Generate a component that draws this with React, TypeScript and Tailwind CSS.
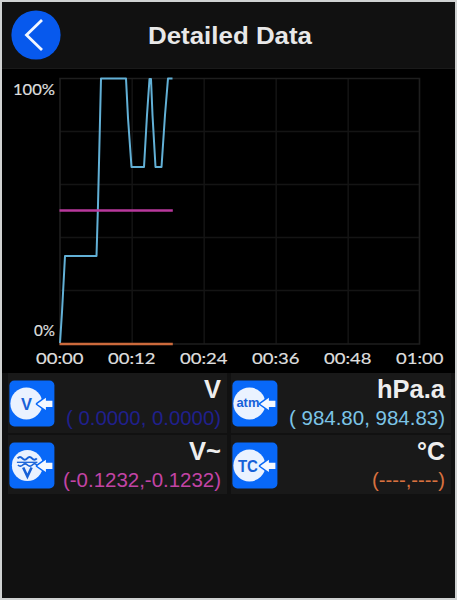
import React from "react";

const FONT = "font-['Liberation_Sans',Arial,sans-serif]";
const GRID_X = [132, 204, 276, 348];
const GRID_Y = [131.5, 184.5, 237.5, 290.5];
const TIMES = ["00:00", "00:12", "00:24", "00:36", "00:48", "01:00"];

function Chart() {
  return (
    <svg viewBox="2 69 453 304" className="block h-[304px] w-[453px] shrink-0 bg-black font-['Lato','Open_Sans',sans-serif]">
      {GRID_X.map((x) => (
        <line key={x} x1={x + 0.2} x2={x + 0.2} y1="78" y2="344" stroke="#141414" strokeWidth="1.5" />
      ))}
      {GRID_Y.map((y) => (
        <line key={y} x1="60" x2="420" y1={y} y2={y} stroke="#141414" strokeWidth="1.5" />
      ))}
      <path d="M60 344V78.5H419.5V344Z" fill="none" stroke="#1e1e1e" strokeWidth="1.6" />
      <path
        d="M60 343L62 312L65 256H96.5L98 205L101 78.5H126L128 118L131.5 167H144L147 115L149.5 79H151L152.5 115L155.5 167H161.5L165 115L168 78.5H172.5"
        fill="none"
        stroke="#62b0d6"
        strokeWidth="2"
        strokeLinejoin="round"
      />
      <path d="M59.5 210.5H172.8" stroke="#b8389c" strokeWidth="2.6" />
      <path d="M59.5 344H172.8" stroke="#cc6a3c" strokeWidth="2.6" />
      <g fill="#dedede" stroke="#dedede" strokeWidth="0.2" fontSize="15.5">
        <text x="13" y="94.5" textLength="42" lengthAdjust="spacingAndGlyphs">100%</text>
        <text x="34" y="336" textLength="21" lengthAdjust="spacingAndGlyphs">0%</text>
        {TIMES.map((t, i) => (
          <text key={t} x={36 + i * 72} y="364.3" textLength="47.5" lengthAdjust="spacingAndGlyphs">{t}</text>
        ))}
      </g>
    </svg>
  );
}

function ChannelIcon({ kind }: { kind: string }) {
  return (
    <svg viewBox="-0.4 -0.5 45 46" className="h-[46px] w-[45px] shrink-0 overflow-visible">
      <rect width="45" height="46" rx="5" fill="#0868f8" />
      <circle cx={kind === "AC" ? 18 : 17} cy="23" r={kind === "AC" ? 15.5 : 16} fill="#eaf2ff" />
      <path
        d="M27.8 23.4L36.5 17.2V20.3H43V26.5H36.5V29.6Z"
        fill="#f4f8ff"
        stroke="#0868f8"
        strokeWidth="3"
        strokeLinejoin="round"
        paintOrder="stroke"
      />
      <g fill="#1761d8" textAnchor="middle" fontWeight="700" className={FONT}>
        {kind === "V" && <text x="17" y="29.2" fontSize="16.5">V</text>}
        {kind === "atm" && <text x="15.5" y="26.8" fontSize="12.5" textLength="23" lengthAdjust="spacingAndGlyphs">atm</text>}
        {kind === "TC" && <text x="15.5" y="29" fontSize="16" textLength="20" lengthAdjust="spacingAndGlyphs">TC</text>}
      </g>
      {kind === "AC" && (
        <g fill="none" stroke="#1761d8">
          <path d="M8.2 15.8q2.4-2.8 4.8 0t4.8 0t4.8 0t4.8 0" strokeWidth="2" />
          <path d="M7.5 19.8H28" strokeWidth="1.3" />
          <path d="M8.5 22.5q2.4 2.4 4.8 0t4.8 0t4.8 0t4.4 0" strokeWidth="1.6" />
          <path d="M13.8 25L18 34L22.2 25" strokeWidth="2.6" />
        </g>
      )}
    </svg>
  );
}

type CardProps = { kind: string; unit: string; unitWidth: number; value: string; color: string; width: number };

function Card({ kind, unit, unitWidth, value, color, width }: CardProps) {
  return (
    <div className="flex bg-[#191919] pt-[7px] pl-px">
      <ChannelIcon kind={kind} />
      <div className="flex min-w-0 flex-1 flex-col items-end pr-[6px]">
        <svg width={unitWidth} height="24" className="-mt-[4px] shrink-0 overflow-visible text-[#eeeeee]">
          <text x="0" y="21.5" fontSize="25" fontWeight="700" fill="currentColor" textLength={unitWidth} lengthAdjust="spacingAndGlyphs">
            {unit}
          </text>
        </svg>
        <svg width={width} height="24" className={`mt-[6px] shrink-0 overflow-visible ${color}`}>
          <text x="0" y="18.5" fontSize="19.5" fill="currentColor" textLength={width} lengthAdjust="spacingAndGlyphs" xmlSpace="preserve">
            {value}
          </text>
        </svg>
      </div>
    </div>
  );
}

export default function App() {
  return (
    <div className={`flex h-[600px] w-[457px] flex-col overflow-hidden border-2 border-[#d0d2d2] bg-[#111111] ${FONT}`}>
      <header className="flex h-[67px] shrink-0 items-center border-b border-[#1a1a1a] pl-[9px]">
        <svg viewBox="0 0 50 50" className="h-[50px] w-[50px] shrink-0">
          <circle cx="25" cy="25" r="24.6" fill="#0759ed" />
          <path d="M31 10L15.5 25L31 40" fill="none" stroke="#f3f7ff" strokeWidth="2.8" />
        </svg>
        <svg viewBox="0 0 166 34" className="ml-[87px] h-[34px] w-[166px]">
          <text x="0" y="25.5" fontSize="24" fontWeight="700" fill="#e8e8e8" textLength="164" lengthAdjust="spacingAndGlyphs">Detailed Data</text>
        </svg>
      </header>
      <Chart />
      <div className="grid h-[121px] shrink-0 grid-cols-[219px_220px] grid-rows-[60px_59px] gap-x-[4px] gap-y-[2px] bg-[#111111] pl-[6px]">
        <Card kind="V" unit="V" unitWidth={17} value="( 0.0000, 0.0000)" color="text-[#20208c]" width={155} />
        <Card kind="atm" unit="hPa.a" unitWidth={68} value="( 984.80, 984.83)" color="text-[#7cc4e6]" width={156} />
        <Card kind="AC" unit="V~" unitWidth={32} value="(-0.1232,-0.1232)" color="text-[#c344a5]" width={158} />
        <Card kind="TC" unit="°C" unitWidth={28} value="(----,----)" color="text-[#d8713f]" width={73} />
      </div>
    </div>
  );
}
